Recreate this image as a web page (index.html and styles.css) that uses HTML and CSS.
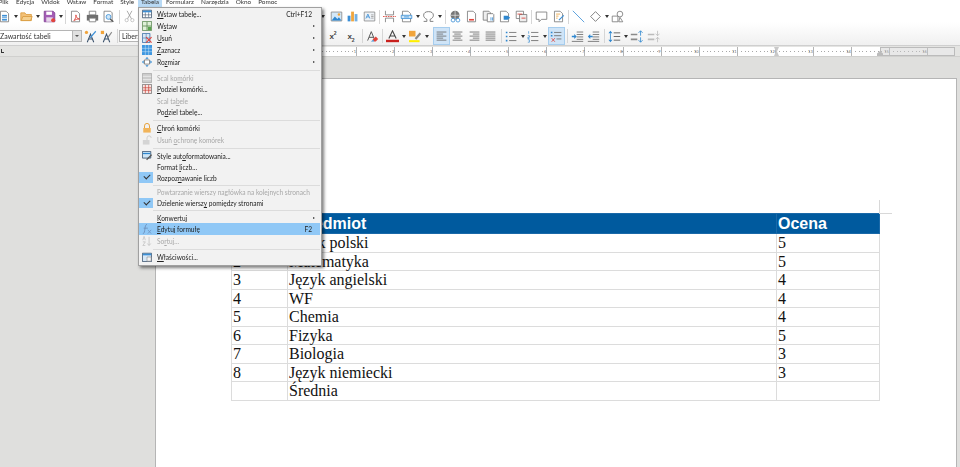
FILE: index.html
```html
<!DOCTYPE html>
<html lang="pl">
<head>
<meta charset="utf-8">
<title>Tabela</title>
<link rel="stylesheet" href="styles.css">
</head>
<body>
<svg class="defs" width="0" height="0">
  <symbol id="new" viewBox="0 0 16 16"><path d="M3 1.500h7l3 3v10H3z" fill="#fff" stroke="#777"/><path d="M5 6h6v7H5z" fill="#3b8fd6"/><path d="M5 8.500h6M5 10.500h6" stroke="#fff"/></symbol>
  <symbol id="open" viewBox="0 0 16 16"><path d="M1 13V3.500h5l1.500 2H14V13z" fill="#f3c178" stroke="#d99a3c"/><path d="M1.500 13l2-5h11.500l-2 5z" fill="#f5d08f" stroke="#d99a3c"/></symbol>
  <symbol id="save" viewBox="0 0 16 16"><path d="M1.500 1.500h11l2 2v11h-13z" fill="#a35bb5" stroke="#7e3f90"/><path d="M4 2h7v4H4z" fill="#fff"/><path d="M4 9h8v5.500H4z" fill="#e6d5ea"/><circle cx="12.500" cy="12.500" r="2.500" fill="#e2443c"/></symbol>
  <symbol id="pdf" viewBox="0 0 16 16"><path d="M3 1.500h7l3 3v10H3z" fill="#fff" stroke="#777"/><path d="M6 13c2-2 3-5 2.500-7 0 3 2 5 4.500 5-3 0-5 1-7 2z" fill="none" stroke="#d9382e"/></symbol>
  <symbol id="print" viewBox="0 0 16 16"><path d="M4 1.500h8V6H4z" fill="#fff" stroke="#777"/><path d="M1 6h14v7H1z" fill="#6e6e6e"/><path d="M4 10h8v4.500H4z" fill="#fff" stroke="#777"/></symbol>
  <symbol id="prev" viewBox="0 0 16 16"><path d="M2.500 1.500h8l2 2v11h-10z" fill="#fff" stroke="#777"/><circle cx="8" cy="8.500" r="3" fill="#cfe6f7" stroke="#3b8fd6"/><path d="M10 11l4 3.500" stroke="#555" stroke-width="1.500"/></symbol>
  <symbol id="cut" viewBox="0 0 16 16"><path d="M5 1l5.500 10M11 1L5.500 11" stroke="#9a9a9a" fill="none"/><circle cx="4.500" cy="12.500" r="2" fill="none" stroke="#bbb"/><circle cx="11.500" cy="12.500" r="2" fill="none" stroke="#bbb"/></symbol>
  <symbol id="image" viewBox="0 0 16 16"><path d="M1.500 2.500h13v11h-13z" fill="#d3e8f8" stroke="#888"/><path d="M2 13l4-5 3 3 2-2 3 4z" fill="#2f87cf"/><circle cx="11" cy="5.500" r="1.500" fill="#f1a43b"/></symbol>
  <symbol id="chart" viewBox="0 0 16 16"><path d="M2 7h3.500v7H2z" fill="#3b8fd6"/><path d="M6.300 2h3.500v12H6.300z" fill="#f0a63f"/><path d="M10.600 5h3.500v9h-3.500z" fill="#3b8fd6" opacity=".7"/></symbol>
  <symbol id="tbox" viewBox="0 0 16 16"><path d="M1.500 2.500h13v11h-13z" fill="#eef2f6" stroke="#8a8a8a"/><path d="M3.500 10.500L6 5l2.500 5.500M4.500 8.500h3" stroke="#3b8fd6" fill="none"/><path d="M10 6h3M10 8h3M10 10h3" stroke="#999"/></symbol>
  <symbol id="pbreak" viewBox="0 0 16 16"><path d="M3 1v5h10V1M3 15v-5h10v5" stroke="#777" fill="none"/><path d="M0 8h16" stroke="#d9382e" stroke-dasharray="2 1"/></symbol>
  <symbol id="field" viewBox="0 0 16 16"><path d="M3 1.500h7l3 3v10H3z" fill="#fff" stroke="#777"/><path d="M1.500 6.500h13v4h-13z" fill="#cfe6f7" stroke="#3b8fd6"/><path d="M5 8.500h6" stroke="#3b8fd6"/></symbol>
  <symbol id="omega" viewBox="0 0 16 16"><path d="M2 14h4v-2.500C3.500 10.500 2 8.500 2 6.500 2 3.500 4.500 2 8 2s6 1.500 6 4.500c0 2-1.500 4-4 5V14h4" fill="none" stroke="#666"/></symbol>
  <symbol id="link" viewBox="0 0 16 16"><circle cx="7.500" cy="6.500" r="5.500" fill="#777"/><path d="M2 6.500h11M7.500 1v11" stroke="#fff" stroke-width=".7"/><circle cx="5" cy="12.500" r="2.300" fill="#fff" stroke="#3b8fd6"/><circle cx="11" cy="12.500" r="2.300" fill="#fff" stroke="#3b8fd6"/></symbol>
  <symbol id="foot" viewBox="0 0 16 16"><path d="M3 1.500h7l3 3v10H3z" fill="#fff" stroke="#777"/><path d="M5 11h6v2H5z" fill="#e2443c"/></symbol>
  <symbol id="endn" viewBox="0 0 16 16"><path d="M1.500 1.500h7l2 2v9h-9z" fill="#eee" stroke="#777"/><path d="M6.500 4.500h7l1 1v9h-8z" fill="#fff" stroke="#777"/><path d="M11 9v4M13 9v4" stroke="#3b8fd6"/></symbol>
  <symbol id="mark" viewBox="0 0 16 16"><path d="M3 1.500h7l3 3v10H3z" fill="#fff" stroke="#777"/><path d="M7 7h5l3 2.500L12 12H7z" fill="#2f87cf"/></symbol>
  <symbol id="xref" viewBox="0 0 16 16"><path d="M1.500 1.500h9v9h-9z" fill="#fff" stroke="#777"/><path d="M5.500 5.500h9v9h-9z" fill="#eee" stroke="#777"/><path d="M3 5h6M8 10h5" stroke="#d9382e"/></symbol>
  <symbol id="comm" viewBox="0 0 16 16"><path d="M1.500 2.500h13v9H8l-3 3v-3H1.500z" fill="#fff" stroke="#777"/></symbol>
  <symbol id="track" viewBox="0 0 16 16"><path d="M3 1.500h7l3 3v10H3z" fill="#fff" stroke="#777"/><path d="M5 5h5M5 7.500h3M5 10h2" stroke="#e8a33d"/><path d="M8 12l6-6 1 1-6 6z" fill="#3b8fd6"/></symbol>
  <symbol id="line" viewBox="0 0 16 16"><path d="M1 1l14 14" stroke="#3b8fd6"/></symbol>
  <symbol id="dia" viewBox="0 0 16 16"><path d="M8 2l6 6-6 6-6-6z" fill="#fff" stroke="#666"/></symbol>
  <symbol id="shapes" viewBox="0 0 16 16"><circle cx="11" cy="5" r="3.500" fill="#fff" stroke="#777"/><path d="M1.500 7.500h7v7h-7z" fill="#fff" stroke="#777"/><path d="M11 9l3.500 5.500h-5z" fill="#fff" stroke="#777"/></symbol>
  <symbol id="style1" viewBox="0 0 16 16"><path d="M4 15L8 5l4 10M5.500 11h5" fill="none" stroke="#39506b" stroke-width="1.300"/><path d="M7 9l7-8 1 1-7 8z" fill="#3b8fd6"/><circle cx="3" cy="3" r="2" fill="#f1a43b"/></symbol>
  <symbol id="style2" viewBox="0 0 16 16"><path d="M4 15L8 5l4 10M5.500 11h5" fill="none" stroke="#39506b" stroke-width="1.300"/><path d="M1 1h4v4H1z" fill="#f1a43b"/><path d="M9 9l5-7 1 1-5 7z" fill="#888"/></symbol>
  <symbol id="clear" viewBox="0 0 16 16"><path d="M2 13L6.500 2 11 13M3.800 9h5.500" fill="none" stroke="#555" stroke-width="1.200"/><path d="M8 12l4-4 3 3-3 3h-2z" fill="#e2443c"/><path d="M6 14l3-2 1 2z" fill="#3b8fd6"/></symbol>
  <symbol id="acol" viewBox="0 0 16 16"><path d="M3.500 10.500L8 1l4.500 9.500M5 7.500h6" fill="none" stroke="#444" stroke-width="1.300"/><path d="M0 12h16v3H0z" fill="#c9211e"/></symbol>
  <symbol id="hl" viewBox="0 0 16 16"><path d="M0 1h8v7H0z" fill="#f1a43b"/><path d="M7 10l6-7 2 2-6 7z" fill="#888"/><path d="M0 12.500h13v2.500H0z" fill="#ffef00"/></symbol>
  <symbol id="al" viewBox="0 0 16 16"><path d="M2 2.500h12M2 5h8M2 7.500h12M2 10h8M2 12.500h12" stroke="#666"/></symbol>
  <symbol id="ac" viewBox="0 0 16 16"><path d="M2 2.500h12M4 5h8M2 7.500h12M4 10h8M2 12.500h12" stroke="#666"/></symbol>
  <symbol id="ar" viewBox="0 0 16 16"><path d="M2 2.500h12M6 5h8M2 7.500h12M6 10h8M2 12.500h12" stroke="#666"/></symbol>
  <symbol id="aj" viewBox="0 0 16 16"><path d="M2 2.500h12M2 5h12M2 7.500h12M2 10h12M2 12.500h12" stroke="#666"/></symbol>
  <symbol id="bul" viewBox="0 0 16 16"><path d="M5 3h9M5 8h9M5 13h9" stroke="#666"/><path d="M1 2h2v2H1zM1 7h2v2H1zM1 12h2v2H1z" fill="#2f87cf"/></symbol>
  <symbol id="num" viewBox="0 0 16 16"><path d="M5 3h9M5 8h9M5 13h9" stroke="#666"/><path d="M2 1.500v3M1 7h2v2H1v1.500h2M1 12h2v3H1" stroke="#2f87cf" fill="none" stroke-width=".8"/></symbol>
  <symbol id="outl" viewBox="0 0 16 16"><path d="M5 3h9M5 7h9M8 11h6" stroke="#666"/><path d="M1 2h2v2H1zM1 6h2v2H1z" fill="#2f87cf"/><path d="M2 10l4 4.500M6 10l-4 4.500" stroke="#e2443c"/></symbol>
  <symbol id="ind" viewBox="0 0 16 16"><path d="M7 2.500h8M7 5.500h8M7 8.500h8M7 11.500h8M1 14h14" stroke="#666"/><path d="M1 7h3V5l3 3-3 3V9H1z" fill="#2f87cf"/></symbol>
  <symbol id="out" viewBox="0 0 16 16"><path d="M7 2.500h8M7 5.500h8M7 8.500h8M7 11.500h8M1 14h14" stroke="#666"/><path d="M7 7H4V5L1 8l3 3V9h3z" fill="#2f87cf"/></symbol>
  <symbol id="lsp" viewBox="0 0 16 16"><path d="M7 3.500h8M7 8h8M7 12.500h8" stroke="#666" stroke-width="1.200"/><path d="M3 1l2.500 3h-5zM3 15l2.500-3h-5z" fill="#2f87cf"/><path d="M3 4v8" stroke="#2f87cf"/></symbol>
  <symbol id="psp" viewBox="0 0 16 16"><path d="M1 4.500h8v2H1zM1 10.500h8v2H1z" fill="#8a8a8a"/><path d="M13 1v6M10.500 3.500L13 1l2.500 2.500M13 9v6M10.500 12.500L13 15l2.500-2.500" stroke="#2f87cf" fill="none"/></symbol>
  <symbol id="psg" viewBox="0 0 16 16"><path d="M1 4.500h8v2H1zM1 10.500h8v2H1z" fill="#bbb"/><path d="M13 1v6M10.500 4.500L13 7l2.500-2.500M13 9v6M10.500 11.500L13 9l2.500 2.500" stroke="#bbb" fill="none"/></symbol>
  <symbol id="mtab" viewBox="0 0 12 12"><path d="M.5 1.500h11v9H.5z" fill="#fff" stroke="#39506b"/><path d="M1 2h10v2H1z" fill="#3b8fd6"/><path d="M4 4v6M8 4v6M1 7h10" stroke="#39506b" stroke-width=".7"/></symbol>
  <symbol id="mins" viewBox="0 0 12 12"><path d="M.5 .500h11v11H.500z" fill="#dff0d8" stroke="#5e8a56"/><path d="M6 1v10M1 6h10" stroke="#5e8a56"/><path d="M7 7h4v4H7z" fill="#5aa34f"/></symbol>
  <symbol id="mdel" viewBox="0 0 12 12"><path d="M.5 .500h9v11h-9z" fill="#d7e8f6" stroke="#3b6ea5"/><path d="M5 1v10M1 6h8" stroke="#3b6ea5" stroke-width=".7"/><path d="M5 5l6.500 6.500M11.500 5L5 11.500" stroke="#e2443c" stroke-width="1.300"/></symbol>
  <symbol id="msel" viewBox="0 0 12 12"><path d="M0 0h12v12H0z" fill="#3f97e0"/><path d="M4 0v12M8 0v12M0 4h12M0 8h12" stroke="#cfe6f7" stroke-width=".6"/></symbol>
  <symbol id="mres" viewBox="0 0 12 12"><path d="M3 3.500h6v5H3z" fill="#fff" stroke="#777"/><path d="M6 0l2 2H4zM6 12l2-2H4zM0 6l2-2v4zM12 6l-2-2v4z" fill="#2f87cf"/></symbol>
  <symbol id="mmrg" viewBox="0 0 12 12"><path d="M.5 .500h11v11H.500z" fill="#ccc" stroke="#aaa"/><path d="M1 4h10M1 8h10" stroke="#eee"/></symbol>
  <symbol id="mspl" viewBox="0 0 12 12"><path d="M.5 .500h11v11H.500z" fill="#f8e5e3" stroke="#777"/><path d="M1 4.500h10M1 7.500h10M4 1v10M8 1v10" stroke="#c9382e" stroke-width=".8"/></symbol>
  <symbol id="mlock" viewBox="0 0 12 12"><path d="M3 6V3.500a3 3 0 0 1 6 0V6" fill="none" stroke="#e8a33d" stroke-width="1.200"/><path d="M1.500 6h9v5.500h-9z" fill="#f1b45a"/></symbol>
  <symbol id="mlockg" viewBox="0 0 12 12"><path d="M6 6V3.500a2.500 2.500 0 0 1 5 0" fill="none" stroke="#c8c8c8"/><path d="M1 6h8v5.500H1z" fill="#d4d4d4"/></symbol>
  <symbol id="mauto" viewBox="0 0 12 12"><path d="M.5 .500h10v8H.500z" fill="#cfe6f7" stroke="#39506b"/><path d="M1 3h9" stroke="#2f87cf" stroke-width="1.500"/><path d="M5 10l6-6 1 1-6 6z" fill="#555"/></symbol>
  <symbol id="mfx" viewBox="0 0 12 12"><path d="M6 .500C4 .500 4 3 3.500 6S3 11.500 1 11.500M2 5h5" fill="none" stroke="#6b8db8"/><path d="M7 7l4 4.500M11 7l-4 4.500" stroke="#6b8db8" stroke-width=".8"/></symbol>
  <symbol id="msort" viewBox="0 0 12 12"><path d="M1 5l1.500-4.500L4 5M1 7h3L1 11.500h3" fill="none" stroke="#c4c4c4"/><path d="M8.500 1v10M6.500 9l2 2.500 2-2.500" fill="none" stroke="#c4c4c4"/></symbol>
  <symbol id="mprop" viewBox="0 0 12 12"><path d="M.5 1.500h11v10H.500z" fill="#d7e8f6" stroke="#39506b"/><path d="M1 2h10v2H1z" fill="#3b8fd6"/><path d="M6 6h5v5H6z" fill="#f4f4f4" stroke="#777" stroke-width=".6"/></symbol>
</svg>

<div class="app">
  <nav class="menubar">
    <span class="m m-plik">Plik</span><span class="m">Edycja</span><span class="m">Widok</span><span class="m">Wstaw</span><span class="m">Format</span><span class="m">Style</span><span class="m m-on">Tabela</span><span class="m">Formularz</span><span class="m">Narzędzia</span><span class="m">Okno</span><span class="m">Pomoc</span>
  </nav>

  <div class="toolbars">
    <div class="tb tb1">
      <svg class="b"><use href="#new"/></svg><i class="a"></i>
      <svg class="b"><use href="#open"/></svg><i class="a"></i>
      <svg class="b"><use href="#save"/></svg><i class="a"></i><i class="s"></i>
      <svg class="b"><use href="#pdf"/></svg><svg class="b"><use href="#print"/></svg><svg class="b"><use href="#prev"/></svg><i class="s"></i>
      <svg class="b"><use href="#cut"/></svg>
      <span class="hidden-run1"></span><i class="a"></i><span class="g2"></span>
      <svg class="b"><use href="#image"/></svg><svg class="b"><use href="#chart"/></svg><svg class="b"><use href="#tbox"/></svg><i class="s"></i>
      <svg class="b"><use href="#pbreak"/></svg><svg class="b"><use href="#field"/></svg><i class="a"></i>
      <svg class="b"><use href="#omega"/></svg><i class="a"></i><i class="s"></i>
      <svg class="b"><use href="#link"/></svg><svg class="b"><use href="#foot"/></svg><svg class="b"><use href="#endn"/></svg><svg class="b"><use href="#mark"/></svg><svg class="b"><use href="#xref"/></svg><i class="s"></i>
      <svg class="b"><use href="#comm"/></svg><svg class="b"><use href="#track"/></svg><i class="s"></i>
      <svg class="b"><use href="#line"/></svg><svg class="b"><use href="#dia"/></svg><i class="a"></i>
      <svg class="b"><use href="#shapes"/></svg>
    </div>
    <div class="tb tb2">
      <span class="combo combo-style">Zawartość tabeli<span class="drop"></span></span>
      <svg class="b"><use href="#style1"/></svg><svg class="b"><use href="#style2"/></svg><i class="s"></i>
      <span class="combo combo-font">Liberation Serif</span>
      <span class="hidden-run2"></span>
      <span class="sc">x<sup>2</sup></span><span class="sc">x<sub>2</sub></span><i class="s"></i>
      <svg class="b"><use href="#clear"/></svg><i class="s"></i>
      <svg class="b"><use href="#acol"/></svg><i class="a"></i>
      <svg class="b"><use href="#hl"/></svg><i class="a"></i><i class="s0"></i>
      <span class="on"><svg class="b"><use href="#al"/></svg></span>
      <svg class="b"><use href="#ac"/></svg><svg class="b"><use href="#ar"/></svg><svg class="b"><use href="#aj"/></svg><i class="s"></i>
      <svg class="b"><use href="#bul"/></svg><i class="a"></i>
      <svg class="b"><use href="#num"/></svg><i class="a"></i>
      <span class="on"><svg class="b"><use href="#outl"/></svg></span><i class="s"></i>
      <svg class="b"><use href="#ind"/></svg><svg class="b"><use href="#out"/></svg><i class="s"></i>
      <svg class="b"><use href="#lsp"/></svg><i class="a"></i>
      <svg class="b"><use href="#psp"/></svg><svg class="b"><use href="#psg"/></svg>
    </div>
  </div>

  <div class="rulerbar">
    <span class="tabmark"></span>
    <div class="ruler">
      <span class="cm"></span><span class="cm"></span><span class="cm"></span><span class="cm">1</span><span class="cm">2</span><span class="cm">3</span><span class="cm">4</span><span class="cm">5</span><span class="cm">6</span><span class="cm">7</span><span class="cm">8</span><span class="cm">9</span><span class="cm">10</span><span class="cm">11</span><span class="cm">12</span><span class="cm">13</span><span class="cm">14</span><span class="cm">15</span><span class="cm">16</span>
      <span class="ruler-margin"></span>
      <span class="hourglass"></span>
      <span class="tri"></span>
    </div>
  </div>

  <main class="workspace">
    <section class="page">
      <div class="table-wrap">
        <table class="doc">
          <colgroup><col class="c1"><col class="c2"><col class="c3"></colgroup>
          <thead><tr><th>Lp.</th><th>Przedmiot</th><th>Ocena</th></tr></thead>
          <tbody>
            <tr><td>1</td><td>Język polski</td><td>5</td></tr>
            <tr><td>2</td><td>Matematyka</td><td>5</td></tr>
            <tr><td>3</td><td>Język angielski</td><td>4</td></tr>
            <tr><td>4</td><td>WF</td><td>4</td></tr>
            <tr><td>5</td><td>Chemia</td><td>4</td></tr>
            <tr><td>6</td><td>Fizyka</td><td>5</td></tr>
            <tr><td>7</td><td>Biologia</td><td>3</td></tr>
            <tr><td>8</td><td>Język niemiecki</td><td>3</td></tr>
            <tr><td></td><td>Średnia</td><td></td></tr>
          </tbody>
        </table>
        <span class="crop crop-v"></span><span class="crop crop-h"></span>
      </div>
    </section>
  </main>
</div>

<div class="menu">
  <div class="r r12"><svg class="mi"><use href="#mtab"/></svg><span class="t"><u>W</u>staw tabelę...</span><span class="k">Ctrl+F12</span></div>
  <div class="r r12"><svg class="mi"><use href="#mins"/></svg><span class="t">W<u>s</u>taw</span><b class="sub"></b></div>
  <div class="r r12"><svg class="mi"><use href="#mdel"/></svg><span class="t"><u>U</u>suń</span><b class="sub"></b></div>
  <div class="r r12"><svg class="mi"><use href="#msel"/></svg><span class="t"><u>Z</u>aznacz</span><b class="sub"></b></div>
  <div class="r r12"><svg class="mi"><use href="#mres"/></svg><span class="t">Ro<u>z</u>miar</span><b class="sub"></b></div>
  <hr>
  <div class="r off"><svg class="mi"><use href="#mmrg"/></svg><span class="t">Scal ko<u>m</u>órki</span></div>
  <div class="r"><svg class="mi"><use href="#mspl"/></svg><span class="t"><u>P</u>odziel komórki...</span></div>
  <div class="r off"><span class="mi"></span><span class="t">Scal ta<u>b</u>ele</span></div>
  <div class="r"><span class="mi"></span><span class="t">Po<u>d</u>ziel tabelę...</span></div>
  <hr>
  <div class="r r12"><svg class="mi"><use href="#mlock"/></svg><span class="t"><u>C</u>hroń komórki</span></div>
  <div class="r r12 off"><svg class="mi"><use href="#mlockg"/></svg><span class="t">Usuń <u>o</u>chronę komórek</span></div>
  <hr>
  <div class="r r11"><svg class="mi"><use href="#mauto"/></svg><span class="t">Style aut<u>o</u>formatowania...</span></div>
  <div class="r r11"><span class="mi"></span><span class="t">Format <u>l</u>iczb...</span></div>
  <div class="r r11"><span class="chk"></span><span class="t">Rozpoz<u>n</u>awanie liczb</span></div>
  <hr>
  <div class="r r105 off"><span class="mi"></span><span class="t">Powtarzanie wierszy nagłówka na kolejnych stronach</span></div>
  <div class="r r105"><span class="chk"></span><span class="t">Dzielenie wiersz<u>y</u> pomiędzy stronami</span></div>
  <hr>
  <div class="r r11"><span class="mi"></span><span class="t"><u>K</u>onwertuj</span><b class="sub"></b></div>
  <div class="r r12 sel"><svg class="mi"><use href="#mfx"/></svg><span class="t"><u>E</u>dytuj formułę</span><span class="k">F2</span></div>
  <div class="r r12 off"><svg class="mi"><use href="#msort"/></svg><span class="t">So<u>r</u>tuj...</span></div>
  <hr>
  <div class="r r12"><svg class="mi"><use href="#mprop"/></svg><span class="t"><u>W</u>łaściwości...</span></div>
</div>
</body>
</html>
```

FILE: styles.css
```css
* { box-sizing: border-box; }
html, body { margin: 0; height: 467px; overflow: hidden; }
body { background: #dfdfdd; font-family: Lato, "Open Sans", sans-serif; color: #222; position: relative; }
.defs { position: absolute; }
.app { display: flex; flex-direction: column; height: 467px; overflow: hidden; filter: blur(.25px); }

.menubar { display: flex; height: 7px; background: #fff; font-size: 6.4px; line-height: 7px; overflow: hidden; flex: none; }
.m { display: block; padding: 0 3.5px; position: relative; top: -2px; color: #333; white-space: nowrap; height: 12px; }
.m-plik { margin-left: -5px; padding-right: 4px; }
.m-on { background: #b9daf5; }

.toolbars { flex: none; height: 39px; background: linear-gradient(#fff 40%, #f0f0f0); border-bottom: 1px solid #cfcfcf; }
.tb { display: flex; align-items: center; }
.tb1 { height: 19px; margin-left: -4px; }
.tb2 { height: 20px; }

.b { width: 13px; height: 13px; margin: 0 1.75px; flex: none; overflow: visible; }
.a { width: 6px; height: 11px; flex: none; position: relative; }
.a::after { content: ""; position: absolute; left: 1px; top: 4px; border: 2px solid transparent; border-top: 3px solid #333; border-bottom: 0; }
.s { width: 4px; height: 14px; flex: none; position: relative; }
.s::after { content: ""; position: absolute; left: 1.500px; top: 0; width: 1px; height: 14px; background: #d6d6d6; }
.s0 { width: 3px; flex: none; }
.g2 { width: 2px; flex: none; }
.hidden-run1 { width: 182.500px; flex: none; }
.hidden-run2 { width: 165px; flex: none; }

.combo { display: block; height: 12px; font-size: 7px; line-height: 10px; background: #fff; border: 1px solid #b5b5b5; white-space: nowrap; overflow: hidden; flex: none; position: relative; color: #333; }
.combo-style { width: 82px; border-left: 0; }
.drop { position: absolute; right: 0; top: 0; width: 9px; height: 10px; background: #e0e0e0; border-left: 1px solid #b5b5b5; }
.drop::after { content: ""; position: absolute; left: 2px; top: 4px; border: 2px solid transparent; border-top: 2px solid #555; border-bottom: 0; }
.combo-font { width: 40px; padding-left: 2px; }

.sc { display: block; width: 18px; flex: none; font: 700 8px "Liberation Sans", sans-serif; text-align: center; color: #444; }
.sc sup, .sc sub { font-size: 5px; color: #444; line-height: 0; }
.on { display: flex; align-items: center; height: 18px; width: 17px; background: #cfe4f7; border: 1px solid #a6cdee; flex: none; }
.on .b { margin: 0 1px; }

.rulerbar { flex: none; height: 11px; display: flex; position: relative; background: #e4e4e2; border-bottom: 1px solid #d0d0ce; }
.tabmark { position: absolute; left: 1px; top: 3px; width: 3px; height: 4px; border-left: 1px solid #333; border-bottom: 1px solid #333; }
.ruler { margin-left: 205px; display: flex; height: 9px; margin-top: 1px; background: #fff; width: 750px; position: relative; overflow: hidden; }
.cm { flex: none; width: 38.05px; height: 9px; font-size: 4px; line-height: 9px; text-align: right; color: #666; border-right: 1px solid #b4b4b4;
  background: repeating-linear-gradient(90deg, transparent 0 2.800px, #a8a8a8 2.800px 3.800px) 0 4px / 100% 1px no-repeat; }
.ruler-margin { position: absolute; left: 675px; top: 0; width: 75px; height: 9px; background: rgba(205,205,205,.45); border: 1px solid #bbb; }
.hourglass { position: absolute; left: 569px; top: 0; width: 5px; height: 9px; background: #c9c9c9; clip-path: polygon(0 0, 100% 0, 60% 50%, 100% 100%, 0 100%, 40% 50%); }
.tri { position: absolute; left: 672px; top: 4px; width: 6px; height: 5px; background: #bbb; clip-path: polygon(50% 0, 100% 50%, 100% 100%, 0 100%, 0 50%); }

.workspace { flex: 1; padding: 21px 3px 0 155px; background: #dfdfdd; min-height: 0; }
.page { background: #fff; height: 500px; border: 1px solid #b5b5b5; border-bottom: 0; padding: 134px 0 0 75px; }
.table-wrap { position: relative; width: 648px; }
.doc { border-collapse: collapse; table-layout: fixed; width: 648px; font: 16px/17.5px "Liberation Serif", serif; color: #111; }
.c1 { width: 56px; } .c2 { width: 489px; } .c3 { width: 103px; }
.doc th { background: #005a9e; color: #fff; font: 700 16px/19px "Liberation Sans", sans-serif; text-align: left; padding: 0 1px; border: 1px solid #1a69a8; height: 20px; }
.doc td { padding: 0 1px; border: 1px solid #dcdcdc; height: 18.55px; }
.crop { position: absolute; background: #d8d8d8; }
.crop-v { left: 648px; top: -13px; width: 1px; height: 13px; }
.crop-h { left: 648px; top: 0; width: 13px; height: 1px; }

.menu { position: absolute; left: 138px; top: 7px; width: 184px; height: 259px; padding: 0 1px 0 0; background: #f2f2f2; border: 1px solid #a0a0a0; box-shadow: 2px 2px 3px rgba(0,0,0,.5); font-size: 6.6px; color: #222; filter: blur(.2px); }
.r { display: flex; align-items: center; height: 11.5px; white-space: nowrap; position: relative; }
.r12 { height: 12px; }
.r11 { height: 11px; }
.r105 { height: 10.5px; }
.r u { text-decoration-thickness: .4px; text-underline-offset: 1px; }
.mi { display: block; width: 10px; height: 10px; margin: 0 5px 0 3px; flex: none; overflow: visible; }
.chk { display: block; width: 14px; height: 10.500px; margin: 0 4px 0 0; flex: none; background: #90c8f6; position: relative; }
.chk::after { content: ""; position: absolute; left: 4.500px; top: 2px; width: 5px; height: 3px; border-left: 1.200px solid #333; border-bottom: 1.200px solid #333; transform: rotate(-45deg); }
.t { flex: 1; }
.k { margin-right: 8px; }
.sub { width: 0; height: 0; border: 1.500px solid transparent; border-left: 2.500px solid #333; border-right: 0; margin-right: 5px; }
.off { color: #a8a8a8; }
.sel { background: #90c8f6; }
hr { border: 0; height: 1px; margin: 1.500px 0 1.500px 14px; background: #dcdcdc; }
```
